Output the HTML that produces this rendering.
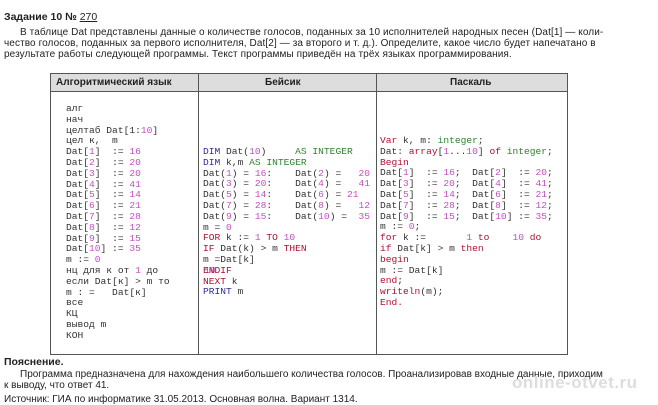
<!DOCTYPE html>
<html><head><meta charset="utf-8"><style>
body{margin:0;width:658px;height:400px;background:#fff;overflow:hidden;position:relative;font-family:"Liberation Sans",sans-serif;color:#222}
.t{position:absolute;font-size:10px;white-space:nowrap}
.c{position:absolute;font-family:"Liberation Mono",monospace;font-size:9.6px;line-height:10.8px;white-space:pre;color:#333}
.n{color:#c050c0}.k{color:#b01030}.b{color:#303090}.g{color:#308030}
</style></head><body>
<div class="t" style="left:4px;top:11px;font-weight:bold;font-size:10.5px">Задание 10 № <span style="text-decoration:underline;font-weight:normal">270</span></div>
<div class="t" style="left:20px;top:27px;letter-spacing:0.1px">В таблице Dat представлены данные о количестве голосов, поданных за 10 исполнителей народных песен (Dat[1] — коли-</div>
<div class="t" style="left:4px;top:38px;letter-spacing:0.1px">чество голосов, поданных за первого исполнителя, Dat[2] — за второго и т. д.). Определите, какое число будет напечатано в</div>
<div class="t" style="left:4px;top:49px;letter-spacing:0.1px">результате работы следующей программы. Текст программы приведён на трёх языках программирования.</div>

<div style="position:absolute;left:50px;top:73px;width:516px;height:280px;border:1px solid #555"></div>
<div style="position:absolute;left:51px;top:74px;width:516px;height:17px;background:#ddd;border-bottom:1px solid #555"></div>
<div style="position:absolute;left:198px;top:73px;width:1px;height:281px;background:#555"></div>
<div style="position:absolute;left:376px;top:73px;width:1px;height:281px;background:#555"></div>
<div class="t" style="left:56px;top:77px;font-weight:bold">Алгоритмический язык</div>
<div class="t" style="left:265px;top:77px;font-weight:bold">Бейсик</div>
<div class="t" style="left:450px;top:77px;font-weight:bold">Паскаль</div>

<div class="c" style="left:66px;top:104px">алг
нач
целтаб Dat[1:<span class="n">10</span>]
цел к,  m
Dat[<span class="n">1</span>]  := <span class="n">16</span>
Dat[<span class="n">2</span>]  := <span class="n">20</span>
Dat[<span class="n">3</span>]  := <span class="n">20</span>
Dat[<span class="n">4</span>]  := <span class="n">41</span>
Dat[<span class="n">5</span>]  := <span class="n">14</span>
Dat[<span class="n">6</span>]  := <span class="n">21</span>
Dat[<span class="n">7</span>]  := <span class="n">28</span>
Dat[<span class="n">8</span>]  := <span class="n">12</span>
Dat[<span class="n">9</span>]  := <span class="n">15</span>
Dat[<span class="n">10</span>] := <span class="n">35</span>
m := <span class="n">0</span>
нц для к от <span class="n">1</span> до        <span class="n">10</span>
если Dat[к] > m то
m : =   Dat[к]
все
КЦ
вывод m
КОН</div>

<div class="c" style="left:203px;top:147px"><span class="b">DIM</span> Dat(<span class="n">10</span>)     <span class="g">AS INTEGER</span>
<span class="b">DIM</span> k,m <span class="g">AS INTEGER</span>
Dat(<span class="n">1</span>) = <span class="n">16</span>:    Dat(<span class="n">2</span>) =   <span class="n">20</span>
Dat(<span class="n">3</span>) = <span class="n">20</span>:    Dat(<span class="n">4</span>) =   <span class="n">41</span>
Dat(<span class="n">5</span>) = <span class="n">14</span>:    Dat(<span class="n">6</span>) = <span class="n">21</span>
Dat(<span class="n">7</span>) = <span class="n">28</span>:    Dat(<span class="n">8</span>) =   <span class="n">12</span>
Dat(<span class="n">9</span>) = <span class="n">15</span>:    Dat(<span class="n">10</span>) =  <span class="n">35</span>
m = <span class="n">0</span>
<span class="k">FOR</span> k := <span class="n">1</span> <span class="k">TO</span> <span class="n">10</span>
<span class="k">IF</span> Dat(k) > m <span class="k">THEN</span>
m =Dat[k]
<span class="k">ENDIF</span>
<span class="k">NEXT</span> k
<span class="b">PRINT</span> m</div>

<div class="c" style="left:380px;top:136px"><span class="k">Var</span> k, m: <span class="g">integer</span>;
Dat: <span class="k">array</span>[<span class="n">1</span>...<span class="n">10</span>] <span class="k">of</span> <span class="g">integer</span>;
<span class="k">Begin</span>
Dat[<span class="n">1</span>]  := <span class="n">16</span>;  Dat[<span class="n">2</span>]  := <span class="n">20</span>;
Dat[<span class="n">3</span>]  := <span class="n">20</span>;  Dat[<span class="n">4</span>]  := <span class="n">41</span>;
Dat[<span class="n">5</span>]  := <span class="n">14</span>;  Dat[<span class="n">6</span>]  := <span class="n">21</span>;
Dat[<span class="n">7</span>]  := <span class="n">28</span>;  Dat[<span class="n">8</span>]  := <span class="n">12</span>;
Dat[<span class="n">9</span>]  := <span class="n">15</span>;  Dat[<span class="n">10</span>] := <span class="n">35</span>;
m := <span class="n">0</span>;
<span class="k">for</span> k :=       <span class="n">1</span> <span class="k">to</span>    <span class="n">10</span> <span class="k">do</span>
<span class="k">if</span> Dat[k] > m <span class="k">then</span>
<span class="k">begin</span>
m := Dat[k]
<span class="k">end</span>;
<span class="k">writeln</span>(m);
<span class="k">End.</span></div>

<div class="t" style="left:4px;top:356px;font-weight:bold;font-size:10.5px">Пояснение.</div>
<div class="t" style="left:20px;top:369px">Программа предназначена для нахождения наибольшего количества голосов. Проанализировав входные данные, приходим</div>
<div class="t" style="left:4px;top:380px">к выводу, что ответ 41.</div>
<div class="t" style="left:4px;top:394px">Источник: ГИА по информатике 31.05.2013. Основная волна. Вариант 1314.</div>
<div class="t" style="left:512px;top:373px;font-size:17px;font-weight:bold;color:#ddd;letter-spacing:0.5px">online-otvet.ru</div>
</body></html>
